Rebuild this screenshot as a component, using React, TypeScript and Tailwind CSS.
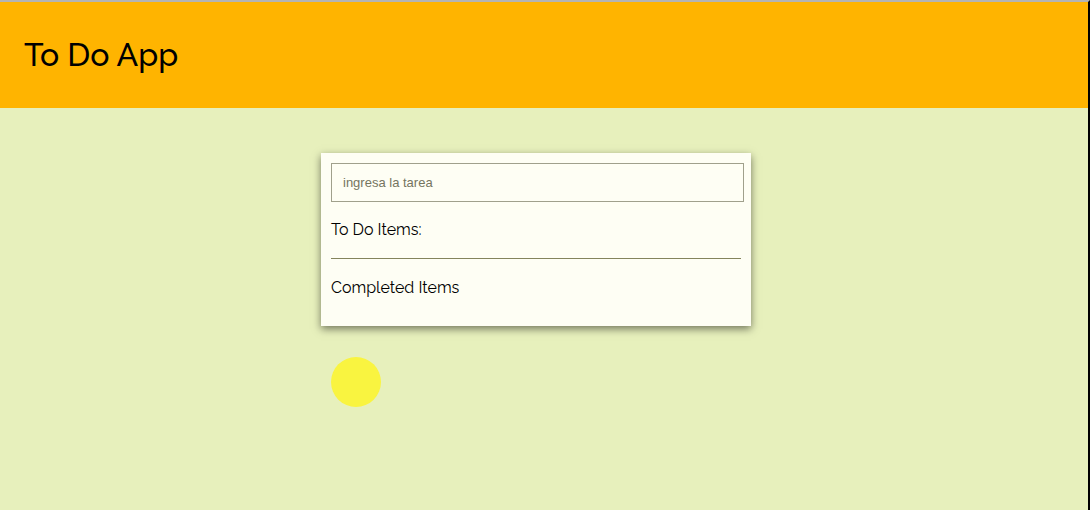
export default function App() {
  return (
    <div className="flex min-h-screen flex-col border-t-2 border-r-2 border-t-[#b4b4b4] border-r-black bg-[#e7f0bc] font-['Raleway','Lato',sans-serif] text-black">
      <header className="bg-[#ffb400] px-6 py-8">
        <h1 className="text-[32px] leading-[42px] font-medium">To Do App</h1>
      </header>
      <main className="mx-auto mt-[45px] w-[430px] -translate-x-2">
        <section className="bg-[#fefef4] p-[10px] shadow-[0_3px_8px_rgba(0,0,0,0.5)]">
          <input
            aria-label="ingresa la tarea"
            placeholder="ingresa la tarea"
            className="block h-[39px] w-[413px] border border-[#a0a08c] bg-transparent px-[11px] font-['Liberation_Sans',Arial,sans-serif] text-[13px] placeholder-[#757560] outline-none"
          />
          <h2 className="mt-4 text-base leading-6">To Do Items:</h2>
          <hr className="mt-4 mb-[17px] border-[#84845c]" />
          <h2 className="mb-4 text-base leading-6">Completed Items</h2>
        </section>
        <button aria-label="Agregar tarea" className="mt-[31px] ml-[10px] block size-[50px] rounded-full bg-[#f9f440]" />
      </main>
    </div>
  );
}
